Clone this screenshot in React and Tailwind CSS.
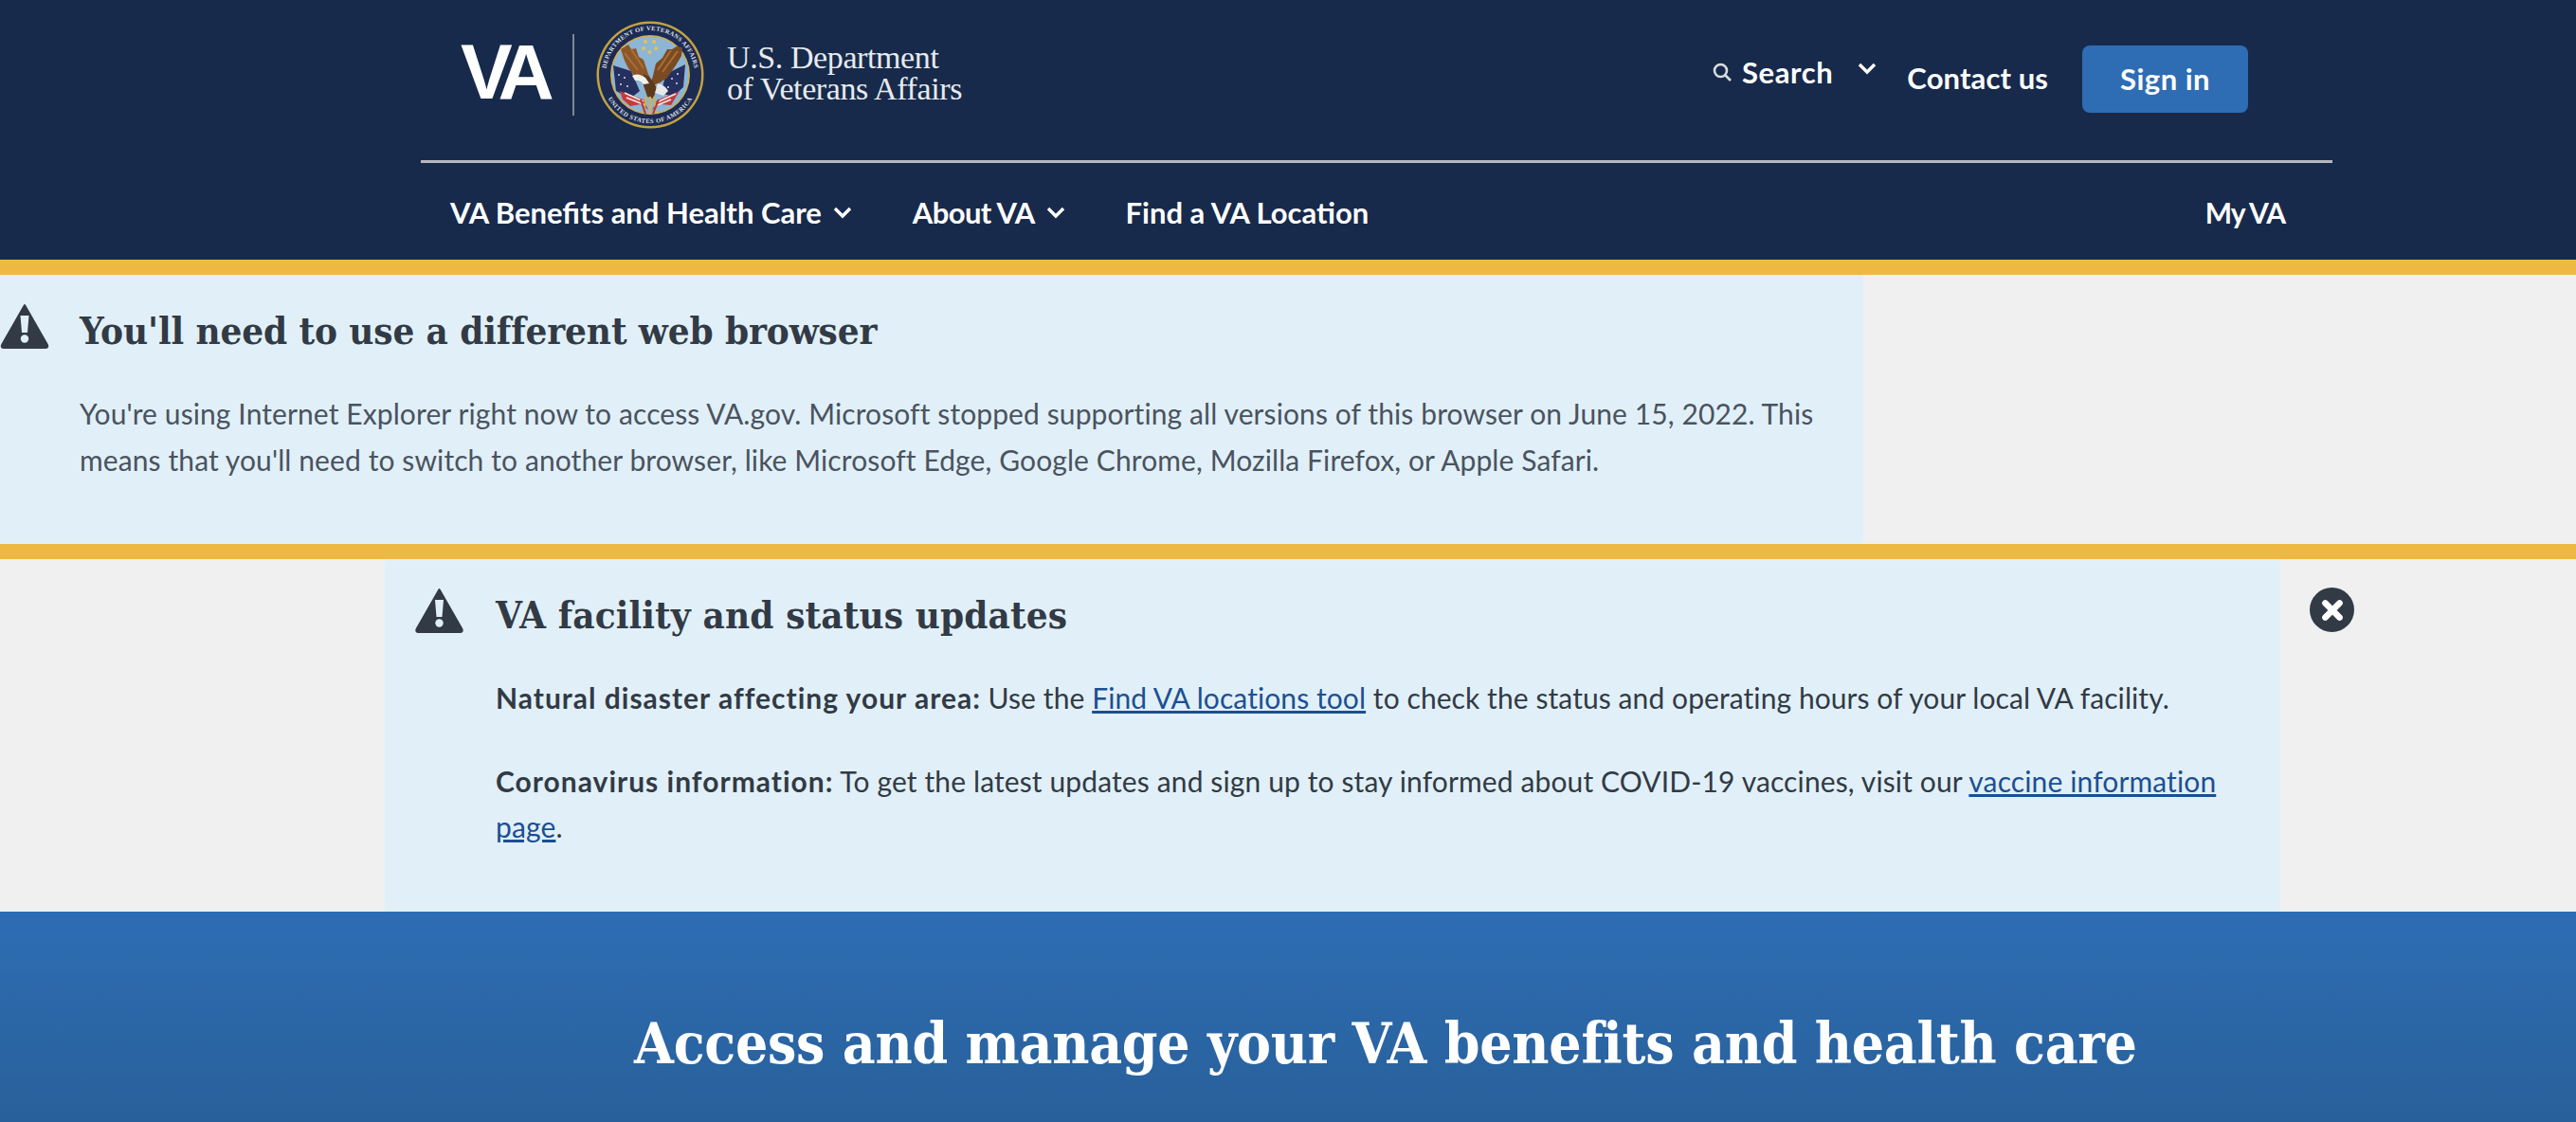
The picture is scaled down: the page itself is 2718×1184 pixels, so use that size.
const Warn = ({ className }) => (
  <svg viewBox="0 0 52 48" className={className}>
    <path d="M26 2 L50 44 Q51 47 48 47 L4 47 Q1 47 2 44 Z" fill="#323a45" stroke="#323a45" strokeWidth="2" strokeLinejoin="round" />
    <path d="M21.5 13 H30.5 L29 31 H23 Z" fill="#e1f0f8" />
    <circle cx="26" cy="37.5" r="4.2" fill="#e1f0f8" />
  </svg>
);

const Chevron = ({ className }) => (
  <svg viewBox="0 0 20 14" className={className} fill="none" stroke="#fff" strokeWidth="3.4">
    <path d="M2 3 L10 11 L18 3" />
  </svg>
);

const Seal = () => (
  <svg viewBox="0 0 114 114" className="w-[114px] h-[114px] shrink-0">
    <circle cx="57" cy="57" r="56.5" fill="#c2a243" />
    <circle cx="57" cy="57" r="54" fill="#1d2a52" />
    <circle cx="57" cy="57" r="42" fill="#d0b04a" />
    <circle cx="57" cy="57" r="40.5" fill="#8db5d6" />
    <defs>
      <path id="sealTop" d="M10 57 A47 47 0 0 1 104 57" />
      <path id="sealBottom" d="M6 57 A51 51 0 0 0 108 57" />
    </defs>
    <text fontSize="6.6" fontFamily="Liberation Serif, serif" fontWeight="700" fill="#dfe3e8" letterSpacing=".35">
      <textPath href="#sealTop" startOffset="50%" textAnchor="middle">DEPARTMENT OF VETERANS AFFAIRS</textPath>
    </text>
    <text fontSize="6.6" fontFamily="Liberation Serif, serif" fontWeight="700" fill="#dfe3e8" letterSpacing=".5">
      <textPath href="#sealBottom" startOffset="50%" textAnchor="middle">UNITED STATES OF AMERICA</textPath>
    </text>
    <g fill="#e2c34e">
      <circle cx="52" cy="22" r="2" /><circle cx="61" cy="22" r="2" />
      <circle cx="50" cy="29" r="2" /><circle cx="63" cy="29" r="2" /><circle cx="56.5" cy="33" r="2" />
    </g>
    <path d="M18 47 L37 53 L46 74 L36 82 L21 74 Z" fill="#26305f" />
    <path d="M94 46 L74 56 L68 76 L81 80 L92 70 Z" fill="#26305f" />
    <g fill="#d7dfee">
      <circle cx="24" cy="57" r="1" /><circle cx="30" cy="60" r="1" /><circle cx="26" cy="67" r="1" /><circle cx="33" cy="69" r="1" />
      <circle cx="86" cy="56" r="1" /><circle cx="80" cy="61" r="1" /><circle cx="85" cy="66" r="1" /><circle cx="76" cy="70" r="1" />
    </g>
    <path d="M25 74 L50 83 L55 94 L47 88 L36 90 L28 83 Z" fill="#c43b3f" />
    <path d="M88 74 L64 84 L59 94 L68 88 L79 89 Z" fill="#c43b3f" />
    <path d="M30 76 L50 85 M32 81 L52 89 M84 77 L64 86 M79 83 L62 90" stroke="#f1e9e4" strokeWidth="1.8" />
    <path d="M26 30 L34 25 L37 30 L42 29 L45 38 L50 41 L55 56 L59 64 L50 64 L42 60 L34 50 L30 42 Z" fill="#8b5628" />
    <path d="M91 28 L85 27 L80 30 L75 30 L70 39 L63 45 L60 58 L57 68 L66 66 L75 60 L84 47 L90 37 Z" fill="#7a4a22" />
    <path d="M30 34 L44 52 M37 30 L50 50 M86 32 L70 54 M79 31 L65 52" stroke="#a96f34" strokeWidth="2" />
    <path d="M50 56 Q60 60 64 72 L60 82 L54 80 L50 68 Z" fill="#5e3a1d" />
    <path d="M38 58 Q44 54 52 60 L56 66 L50 67 Q46 62 41 63 Z" fill="#f2f2ee" />
    <path d="M65 66 Q73 68 76 74 L71 79 L62 76 Z" fill="#e6e8ea" />
    <path d="M53 80 L50 98 M57 80 L57 98 M61 80 L63 97" stroke="#d9b23e" strokeWidth="2" />
    <path d="M47 83 L52 98 M66 83 L60 98" stroke="#b5353a" strokeWidth="2" />
  </svg>
);

export default function App() {
  return (
    <div className="h-[1184px] overflow-hidden bg-[#f0f0f0] font-[Lato,sans-serif] text-[#323a45]">
      <header className="h-[274px] bg-[#172a4b] text-white font-bold">
        <div className="ml-[444px] w-[2017px]">
          <div className="flex h-[172px] border-b-[3px] border-[#b4b8c0] pl-[42px] pr-[89px]">
            <div className="flex items-start">
              <span className="mt-[29px] w-[94px] font-['Liberation_Sans',sans-serif] text-[82px] leading-[94px] font-bold tracking-[-9px] text-white">VA</span>
              <div className="ml-[24px] mt-[36px] h-[86px] w-[2px] bg-[#7e8797]" />
              <div className="ml-[23px] mt-[22px]"><Seal /></div>
              <div className="ml-[24px] mt-[44px] font-['Liberation_Serif',serif] text-[34px] leading-[33px] font-normal text-[#e8eaee] tracking-[-0.4px]">
                <div>U.S. Department</div>
                <div>of Veterans Affairs</div>
              </div>
            </div>
            <div className="ml-auto flex items-start">
              <div className="mt-[56px] flex items-center">
                <svg viewBox="0 0 20 20" className="h-[20px] w-[20px]" fill="none" stroke="#d8dbe0" strokeWidth="2.6">
                  <circle cx="8.5" cy="8.5" r="6.5" /><path d="M13 13 L19 19" />
                </svg>
                <span className="ml-[11px] text-[31px] leading-[40px] tracking-[0.6px]">Search</span>
                <Chevron className="ml-[26px] mb-[8px] h-[14px] w-[20px]" />
              </div>
              <span className="ml-[32px] mt-[62px] text-[31px] leading-[40px] tracking-[0.1px]">Contact us</span>
              <button className="ml-[36px] mt-[48px] h-[71px] w-[175px] rounded-[8px] bg-[#2e6db4] pb-[2px] text-[31px] leading-[40px] font-bold tracking-[0.5px] text-white">Sign in</button>
            </div>
          </div>
          <nav className="flex h-[102px] items-center pl-[31px] pr-[50px] pt-[1px] text-[31px] leading-[40px]">
            <span>VA Benefits and Health Care</span>
            <Chevron className="ml-[12px] h-[14px] w-[20px]" />
            <span className="ml-[64px] tracking-[-0.6px]">About VA</span>
            <Chevron className="ml-[12px] h-[14px] w-[20px]" />
            <span className="ml-[64px]">Find a VA Location</span>
            <span className="ml-auto text-[30px] tracking-[-1px]">My VA</span>
          </nav>
        </div>
      </header>

      <section className="h-[300px] border-t-[16px] border-[#eeb943]">
        <div className="relative h-[284px] w-[1966px] bg-[#e1f0f8] pl-[84px] pt-[34px]">
          <Warn className="absolute left-0 top-[30px] h-[48px] w-[52px]" />
          <h2 className="font-['DejaVu_Serif_Condensed','DejaVu_Serif',serif] text-[40px] leading-[50px] font-bold tracking-[-0.12px]">You'll need to use a different web browser</h2>
          <p className="mt-[38px] w-[1860px] text-[30px] leading-[48.5px] tracking-[0.1px] text-[#4a5360]">
            You're using Internet Explorer right now to access VA.gov. Microsoft stopped supporting all versions of this browser on June 15, 2022. This means that you'll need to switch to another browser, like Microsoft Edge, Google Chrome, Mozilla Firefox, or Apple Safari.
          </p>
        </div>
      </section>

      <section className="relative h-[388px] border-t-[16px] border-[#eeb943]">
        <div className="relative ml-[406px] h-[372px] w-[2000px] bg-[#e1f0f8] pl-[117px] pt-[34px]">
          <Warn className="absolute left-[30px] top-[30px] h-[48px] w-[55px]" />
          <h2 className="font-['DejaVu_Serif_Condensed','DejaVu_Serif',serif] text-[40px] leading-[50px] font-bold tracking-[0.12px]">VA facility and status updates</h2>
          <p className="mt-[38px] text-[30px] leading-[48.5px] tracking-[0.08px]">
            <strong className="tracking-[1px]">Natural disaster affecting your area:</strong> Use the <a href="#" className="text-[#1c4f94] underline">Find VA locations tool</a> to check the status and operating hours of your local VA facility.
          </p>
          <p className="mt-[39px] w-[1840px] text-[30px] leading-[48.5px] tracking-[0.12px]">
            <strong className="tracking-[1px]">Coronavirus information:</strong> To get the latest updates and sign up to stay informed about COVID-19 vaccines, visit our <a href="#" className="text-[#1c4f94] underline">vaccine information page</a>.
          </p>
        </div>
        <button className="absolute left-[2437px] top-[30px] flex h-[47px] w-[47px] items-center justify-center rounded-full bg-[#323a45]">
          <svg viewBox="0 0 24 24" className="h-[26px] w-[26px]" fill="none" stroke="#fff" strokeWidth="6" strokeLinecap="round">
            <path d="M5 5 L19 19 M19 5 L5 19" />
          </svg>
        </button>
      </section>

      <section className="h-[222px] bg-gradient-to-b from-[#2e6db4] to-[#28609a] pl-[669px] pt-[104px]">
        <h1 className="font-['DejaVu_Serif_Condensed','DejaVu_Serif',serif] text-[60px] leading-[70px] font-bold tracking-[-0.25px] text-white">Access and manage your VA benefits and health care</h1>
      </section>
    </div>
  );
}
